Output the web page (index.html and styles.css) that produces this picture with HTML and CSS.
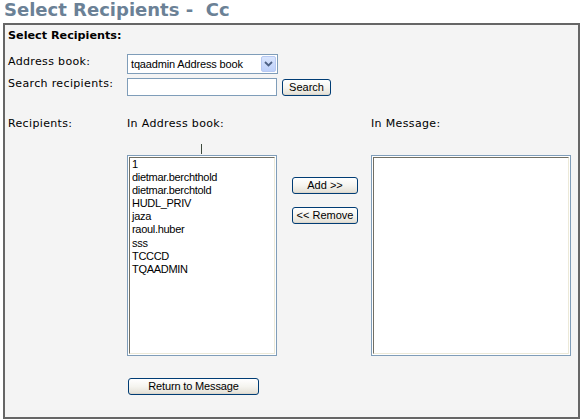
FILE: index.html
```html
<!DOCTYPE html>
<html>
<head>
<meta charset="utf-8">
<title>Select Recipients</title>
<link rel="stylesheet" href="styles.css">
</head>
<body>
<h1 class="title">Select Recipients -&nbsp; Cc</h1>
<div class="panel">
  <div class="heading">Select Recipients:</div>
  <div class="row row-book">
    <label class="label label-book">Address book:</label>
    <div class="select">
      <span class="select-text">tqaadmin Address book</span>
      <span class="select-arrow"><svg width="9" height="6" viewBox="0 0 9 6"><path d="M1 1 L4.5 4.5 L8 1" fill="none" stroke="#4d6185" stroke-width="1.8"/></svg></span>
    </div>
  </div>
  <div class="row row-search">
    <label class="label">Search recipients:</label>
    <input class="search-input" type="text">
    <button class="btn btn-search">Search</button>
  </div>
  <div class="recipients">
    <div class="label cell-label">Recipients:</div>
    <div class="label cell-book-label">In Address book:</div>
    <div class="label cell-msg-label">In Message:</div>
    <div class="cell-tick"><span class="tick"></span></div>
    <div class="listbox list-book">
      <div class="listbox-inner">
        <div class="item">1</div>
        <div class="item">dietmar.berchthold</div>
        <div class="item">dietmar.berchtold</div>
        <div class="item">HUDL_PRIV</div>
        <div class="item">jaza</div>
        <div class="item">raoul.huber</div>
        <div class="item">sss</div>
        <div class="item">TCCCD</div>
        <div class="item">TQAADMIN</div>
      </div>
    </div>
    <div class="move-buttons">
      <button class="btn btn-move">Add &gt;&gt;</button>
      <button class="btn btn-move btn-remove">&lt;&lt; Remove</button>
    </div>
    <div class="listbox list-msg">
      <div class="listbox-inner"></div>
    </div>
    <button class="btn btn-return">Return to Message</button>
  </div>
</div>
</body>
</html>
```

FILE: styles.css
```css
html, body {
  margin: 0;
  padding: 0;
  background: #ffffff;
}

body {
  width: 582px;
  height: 419px;
  overflow: hidden;
  font-family: "DejaVu Sans", Verdana, sans-serif;
  color: #000;
}

.title {
  margin: 0;
  padding: 0 0 4px 4px;
  height: 19px;
  line-height: 19px;
  font-family: "DejaVu Sans", Verdana, sans-serif;
  font-weight: bold;
  font-size: 18px;
  color: #6b8196;
  white-space: nowrap;
}

.panel {
  margin: 0 2px 0 3px;
  border: 2px solid #666666;
  background: #f4f4f4;
  padding: 4px 0 22px 3px;
}

.heading {
  font-weight: bold;
  font-size: 11.2px;
  line-height: 13px;
  height: 13px;
}

.label {
  font-size: 11px;
  letter-spacing: 0.35px;
  line-height: 13px;
  white-space: nowrap;
}

.row {
  display: flex;
  align-items: flex-start;
}

.row .label {
  width: 119px;
  flex: none;
}

.row-book {
  margin-top: 12px;
}

.label-book {
  padding-top: 1px;
}

.select {
  position: relative;
  box-sizing: border-box;
  width: 151px;
  height: 20px;
  border: 1px solid #7f9db9;
  background: #fff;
  display: flex;
  align-items: center;
}

.select-text {
  padding-left: 3px;
  font-family: "Liberation Sans", Arial, sans-serif;
  font-size: 11px;
  letter-spacing: -0.15px;
}

.select-arrow {
  position: absolute;
  top: 1px;
  right: 1px;
  width: 15px;
  height: 16px;
  box-sizing: border-box;
  border: 1px solid #b7c9f2;
  border-radius: 2px;
  background: linear-gradient(#d9e5fd, #bdd0fa);
  display: flex;
  align-items: center;
  justify-content: center;
}

.row-search {
  margin-top: 3px;
}

.search-input {
  box-sizing: border-box;
  width: 150px;
  height: 18px;
  margin: 1px 0 0 0;
  padding: 0 2px;
  border: 1px solid #7f9db9;
  background: #fff;
  outline: none;
}

.btn {
  box-sizing: border-box;
  height: 17px;
  margin: 0;
  padding: 0;
  border: 1px solid #003c74;
  border-radius: 3px;
  background: linear-gradient(#ffffff 0%, #f5f4ef 50%, #e6e3da 90%, #d6d0c5 100%);
  font-family: "Liberation Sans", Arial, sans-serif;
  font-size: 11px;
  line-height: 15px;
  color: #000;
  text-align: center;
  white-space: nowrap;
}

.btn-search {
  width: 49px;
  margin: 2px 0 0 5px;
}

.recipients {
  margin-top: 21px;
  display: grid;
  grid-template-columns: 119px 150px 15px 66px 13px 200px;
  grid-template-rows: 13px 25px 201px auto;
}

.cell-label {
  grid-column: 1;
  grid-row: 1;
}

.cell-book-label {
  grid-column: 2;
  grid-row: 1;
}

.cell-msg-label {
  grid-column: 6;
  grid-row: 1;
}

.cell-tick {
  grid-column: 2;
  grid-row: 2;
  align-self: end;
  display: flex;
  justify-content: center;
  height: 11px;
}

.tick {
  width: 1px;
  height: 10px;
  margin-left: -1px;
  background: #3d4a3d;
}

.listbox {
  grid-row: 3;
  box-sizing: border-box;
  border: 1px solid #7f9db9;
  padding: 1px;
  background: #fff;
}

.list-book {
  grid-column: 2;
}

.list-msg {
  grid-column: 6;
}

.listbox-inner {
  box-sizing: border-box;
  height: 100%;
  border: 1px solid;
  border-color: #716f64 #ece9d8 #ece9d8 #716f64;
  padding-left: 2px;
}

.item {
  font-family: "Liberation Sans", Arial, sans-serif;
  font-size: 11px;
  letter-spacing: -0.3px;
  line-height: 13.1px;
  white-space: nowrap;
}

.move-buttons {
  grid-column: 4;
  grid-row: 3;
  padding-top: 22px;
  display: flex;
  flex-direction: column;
}

.btn-move {
  width: 66px;
}

.btn-remove {
  margin-top: 13px;
}

.btn-return {
  grid-column: 2;
  grid-row: 4;
  width: 131px;
  margin: 22px 0 0 1px;
  letter-spacing: -0.15px;
}
```
